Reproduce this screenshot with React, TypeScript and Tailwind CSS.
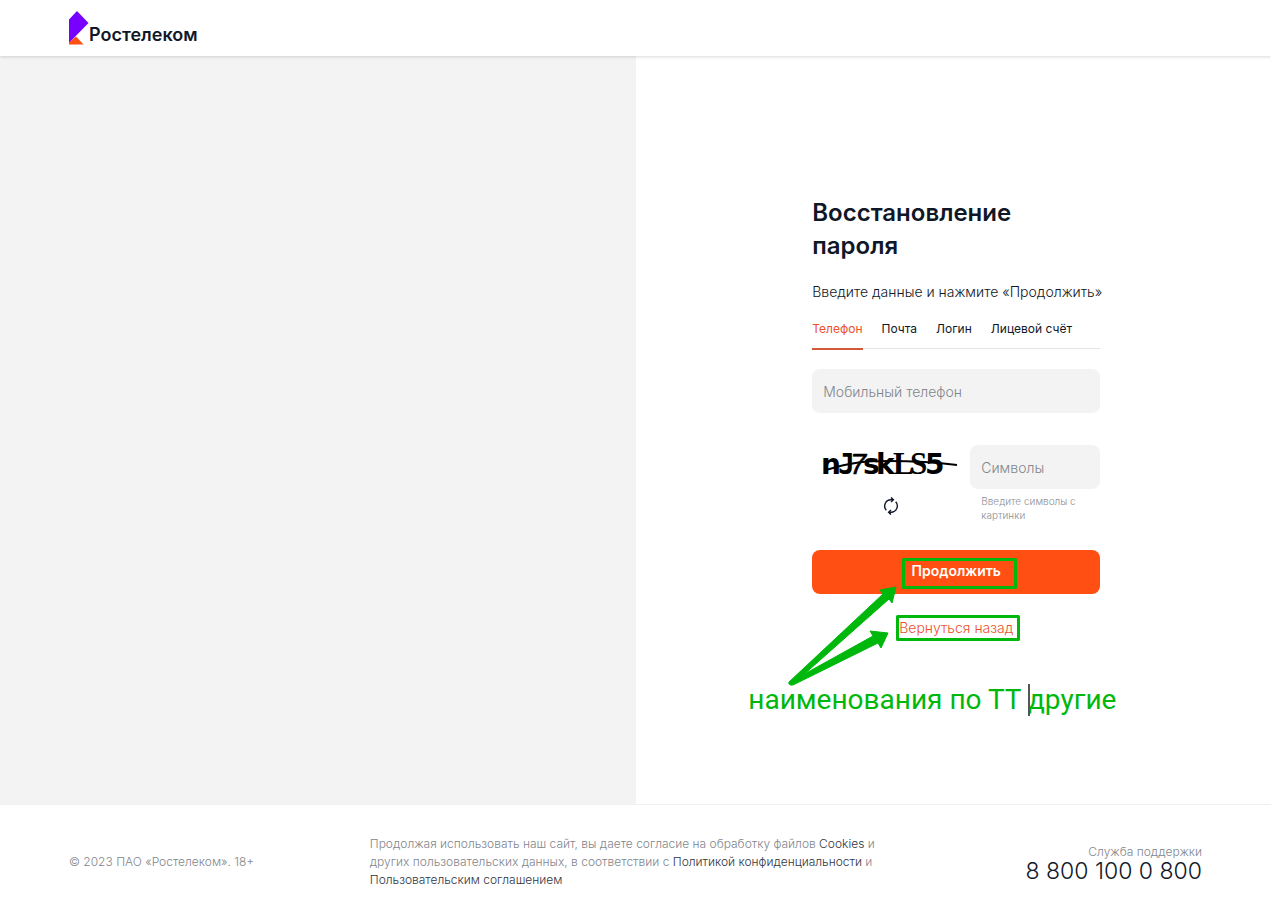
import { useState } from "react";

const tabs = ["Телефон", "Почта", "Логин", "Лицевой счёт"];

function Logo() {
  return (
    <a href="#" aria-label="Ростелеком" className="flex items-end">
      <svg width="20" height="34" viewBox="0 0 20 34" aria-hidden="true">
        <path d="M0 8.500 8 0l11.500 12L7.300 24.500 0 32z" fill="#7700ff" />
        <path d="M0 33.500V31.500L7 25.500l7.500 8z" fill="#ff4f12" />
      </svg>
      <span className="text-lg leading-5 font-semibold">Ростелеком</span>
    </a>
  );
}

function Captcha() {
  return (
    <svg width="138" height="36" viewBox="0 0 138 36" className="overflow-visible" role="img" aria-label="Капча">
      <g fontSize="28" fontWeight="700" fill="#000" stroke="#000" strokeWidth="0" fontFamily="'DejaVu Sans'">
        <text x="-1" y="25">n</text>
        <text x="16" y="25" fontFamily="'DejaVu Sans Mono'">J</text>
        <text x="28" y="25" fontFamily="'Liberation Sans'" fontWeight="400" fontStyle="italic" fontSize="29" strokeWidth="0.5">7</text>
        <text x="41" y="25">s</text>
        <text x="54" y="25">k</text>
        <text x="71" y="25" fontFamily="'Liberation Serif'" fontSize="31">L</text>
        <text x="88" y="25" fontFamily="'Liberation Serif'" fontSize="31">S</text>
        <text x="103" y="25">5</text>
      </g>
      <path d="M4 21C30 13 44 12 66 12s46 1 69 4" fill="none" stroke="#000" strokeWidth="2" />
    </svg>
  );
}

function RefreshIcon() {
  return (
    <svg width="16" height="18" viewBox="0 0 16 18" fill="none" stroke="#101828" strokeWidth="1.400" aria-hidden="true">
      <path d="M10 2.700H8A6.300 6.300 0 0 0 3.300 13.200M6 15.300H8A6.300 6.300 0 0 0 12.700 4.800" />
      <path d="m8 .4 2.400 2.300L8 5M8 13l-2.400 2.300L8 17.600" />
    </svg>
  );
}

function Notes() {
  return (
    <div className="pointer-events-none absolute -left-16 top-[354px] w-[370px] text-[#00b80c]">
      <svg width="280" height="134" viewBox="0 0 280 134" className="block overflow-visible" aria-hidden="true">
        <g fill="none" stroke="currentColor" strokeWidth="3" strokeLinejoin="round">
          <rect x="155.500" y="9.500" width="112" height="28" />
          <rect x="149.500" y="66.500" width="121" height="23" />
        </g>
        <g fill="currentColor" stroke="currentColor" strokeWidth="1" strokeLinejoin="round">
          <path d="M41 132 135 44l-3-4 16-3-4 16-3-4-97 86q-4 0-3-3Z" />
          <path d="M42 132 125 86l-3-5 18 2-7 15-3-5L45 135q-4 0-3-3Z" />
        </g>
      </svg>
      <p className="relative font-['Roboto',sans-serif] text-[28px] leading-8 whitespace-nowrap">
        наименования по ТТ другие
        <span className="absolute top-0 left-[280px] h-8 w-0.5 bg-[#555]" />
      </p>
    </div>
  );
}

export default function App() {
  const [active, setActive] = useState(tabs[0]);
  return (
    <div className="flex min-h-screen flex-col bg-white font-['Inter',sans-serif] text-[#101828]">
      <header className="relative flex h-14 items-end px-[69px] pb-[11px] shadow-[0_1px_3px_rgba(0,0,0,0.15)]">
        <Logo />
      </header>

      <main className="grid flex-1 grid-cols-2">
        <div className="bg-[#f3f3f3]" />
        <section className="flex justify-center pt-[140px] pb-20 pl-1.5">
          <form className="relative w-72" onSubmit={(e) => e.preventDefault()}>
            <h1 className="w-60 text-2xl leading-[33px] font-semibold">Восстановление пароля</h1>
            <p className="mt-5 text-sm leading-5 font-light whitespace-nowrap">
              Введите данные и нажмите «Продолжить»
            </p>
            <div role="tablist" className="mt-4 flex h-[31px] gap-[19px] border-b border-[#e3e4e6] text-xs">
              {tabs.map((tab) => (
                <button
                  key={tab}
                  type="button"
                  role="tab"
                  aria-selected={tab === active}
                  onClick={() => setActive(tab)}
                  className={
                    tab === active
                      ? "h-8 border-b-2 border-[#d45a36] pb-2 whitespace-nowrap text-[#e9512c]"
                      : "h-8 border-b-2 border-transparent pb-2 whitespace-nowrap"
                  }
                >
                  {tab}
                </button>
              ))}
            </div>
            <input
              type="tel"
              aria-label="Мобильный телефон"
              placeholder="Мобильный телефон"
              className="mt-5 block h-11 w-full rounded-lg bg-[#f3f3f3] px-[11px] text-sm font-light outline-none placeholder:text-[#82868d]"
            />
            <div className="mt-8 flex justify-between">
              <div className="flex w-[158px] flex-col items-center pt-1">
                <Captcha />
                <button type="button" aria-label="Обновить" className="mt-3">
                  <RefreshIcon />
                </button>
              </div>
              <div className="w-[130px]">
                <input
                  type="text"
                  aria-label="Символы"
                  aria-describedby="captcha-hint"
                  placeholder="Символы"
                  className="block h-11 w-full rounded-lg bg-[#f3f3f3] px-[11px] text-sm font-light outline-none placeholder:text-[#82868d]"
                />
                <p id="captcha-hint" className="mt-[5px] px-[11px] text-[10px] leading-[14px] font-light text-[#8b8f95]">
                  Введите символы с картинки
                </p>
              </div>
            </div>
            <button
              type="submit"
              className="mt-7 block h-11 w-full rounded-lg bg-[#ff4f12] pb-0.5 text-sm font-semibold text-white"
            >
              Продолжить
            </button>
            <a href="#" className="mt-6 block text-center text-sm leading-5 font-light text-[#e9512c]">
              Вернуться назад
            </a>
            <Notes />
          </form>
        </section>
      </main>

      <footer className="flex items-center justify-between border-t border-[#f0f0f0] px-[69px] pt-[30px] pb-[26px] text-xs leading-[18px] font-light text-[#82868d]">
        <p>© 2023 ПАО «Ростелеком». 18+</p>
        <p className="w-[540px]">
          Продолжая использовать наш сайт, вы даете согласие на обработку файлов{" "}
          <a href="#" className="text-[#30353f]">Cookies</a> и<br />
          других пользовательских данных, в соответствии с{" "}
          <a href="#" className="text-[#30353f]">Политикой конфиденциальности</a> и<br />
          <a href="#" className="text-[#30353f]">Пользовательским соглашением</a>
        </p>
        <div className="text-right">
          <p>Служба поддержки</p>
          <a href="tel:88001000800" className="block text-[23px] leading-5 text-[#101828]">
            8 800 100 0 800
          </a>
        </div>
      </footer>
    </div>
  );
}
